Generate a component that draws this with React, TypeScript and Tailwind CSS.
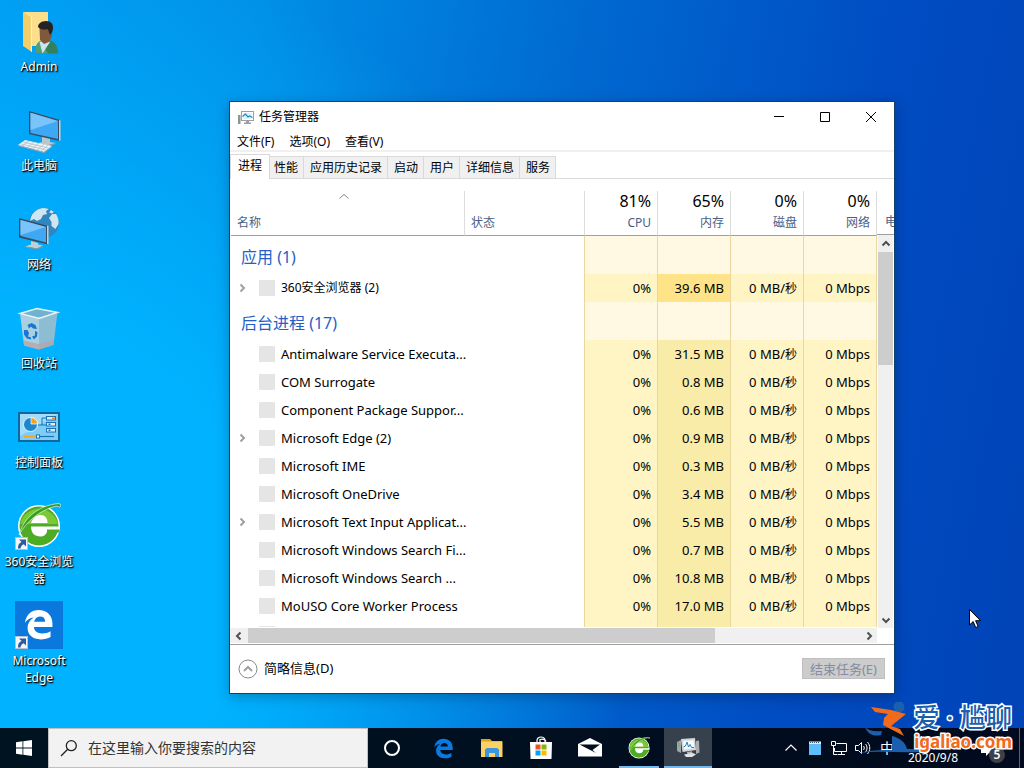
import React from "react";
import clsx from "clsx";

interface ProcessRow {
  name: string;
  memory: string;
  expandable?: boolean;
  small?: boolean;
}

const apps: ProcessRow[] = [
  { name: "360安全浏览器 (2)", memory: "39.6 MB", expandable: true, small: true },
];

const background: ProcessRow[] = [
  { name: "Antimalware Service Executa...", memory: "31.5 MB" },
  { name: "COM Surrogate", memory: "0.8 MB" },
  { name: "Component Package Suppor...", memory: "0.6 MB" },
  { name: "Microsoft Edge (2)", memory: "0.9 MB", expandable: true },
  { name: "Microsoft IME", memory: "0.3 MB" },
  { name: "Microsoft OneDrive", memory: "3.4 MB" },
  { name: "Microsoft Text Input Applicat...", memory: "5.5 MB", expandable: true },
  { name: "Microsoft Windows Search Fi...", memory: "0.7 MB" },
  { name: "Microsoft Windows Search ...", memory: "10.8 MB" },
  { name: "MoUSO Core Worker Process", memory: "17.0 MB" },
];

const tabs = ["进程", "性能", "应用历史记录", "启动", "用户", "详细信息", "服务"];

const usage = [
  { label: "CPU", value: "81%" },
  { label: "内存", value: "65%" },
  { label: "磁盘", value: "0%" },
  { label: "网络", value: "0%" },
];

const Shortcut = () => (
  <g>
    <rect x="0.500" y="35.500" width="12" height="12" fill="#f4f6f8" stroke="#b9c2cc" />
    <path d="M4 37.500h7v7l-2.300-2.300c-2 .8-3 2.300-3.200 4.300H3c0-3.500 1-5.200 3.600-6.400z" fill="#2d5c9e" />
  </g>
);

const AdminIcon = () => (
  <svg viewBox="0 0 48 48" className="size-12">
    <path d="M9 5h24v34H17z" fill="#fbdf8a" />
    <path d="M8 5l9 4v36L8 39z" fill="#f3cd68" />
    <path d="M8 5l9 4v36l-1.200-.8V9.800z" fill="#fdeeb4" />
    <path d="M20 46.500c0-8 3-13.500 11-13.500s12 5 12 13.500z" fill="#34805b" />
    <path d="M20 46.500c0-6 1.500-10.500 5-12.500l3 4 5 8.500z" fill="#4f9f78" />
    <path d="M24.500 35l3 11.500L35 35l-3-2z" fill="#cfe3ee" />
    <path d="M24.500 21h12l.5 8-3 6-5 2-4-4z" fill="#80593c" />
    <path d="M23 20c0-3 3-6 8-6 5 0 7.500 3 7 7.500-.3 3-1.200 4.500-3 6.500-1-2-1-4-2.500-6-3 1-6.500 1-9.500-2z" fill="#262224" />
  </svg>
);

const MonitorIcon = () => (
  <svg viewBox="0 0 48 48" className="size-12">
    <path d="M14 5l31 9v21l-31-7z" fill="#3a4a58" />
    <path d="M44 14l1.500.5v20L44 35z" fill="#c6d0d6" />
    <path d="M15.500 6.800L43 15v18l-27.500-6z" fill="#3fa8f5" />
    <path d="M15.500 6.800L43 15 15.500 24z" fill="#79c4fa" />
    <path d="M27 31l8 2v3l6 1-9 3-11-2 6-2z" fill="#b9c6cf" />
    <path d="M21 37l11 2.200L41 37v1l-9 3-11-2.800z" fill="#8696a2" />
    <path d="M10 34l27 6-8 6L3 39z" fill="#eef1f3" />
    <path d="M3 39l26 7 8-6v1l-8 6-26-7z" fill="#9aa6ae" />
    <path d="M8 36l25 6M6 38l25 6M14 35l-7 5M19 36l-7 6M24 37l-7 6M29 38l-7 6M33 39l-7 6" stroke="#b4bec5" strokeWidth=".8" />
  </svg>
);

const NetworkIcon = () => (
  <svg viewBox="0 0 48 48" className="size-12">
    <circle cx="29" cy="18" r="15" fill="#2f86c0" />
    <path d="M16 12c2-5 7-9 13-9l5 1-3 2 1 3-4 1-2 4-4 2-3-2-4 2zM34 13l3-4 4 0c2 3 3 6 2.500 10l-3 5-4-3v-4z" fill="#cfe6f1" />
    <path d="M36 5l3 2-2 1.500-3-1zM22 21l5 1 1 4-4 1z" fill="#cfe6f1" />
    <path d="M4 13l29 8v18.500L4 32.500z" fill="#3a4a58" />
    <path d="M32 20.500l1.500.5v18.500L32 39z" fill="#c6d0d6" />
    <path d="M5.500 15L31 22v15.500L5.500 31z" fill="#3fa8f5" />
    <path d="M5.500 15L31 22 5.500 30z" fill="#79c4fa" />
    <path d="M16 36l7 2v1.500l5 1-6 3-12-2 6-2z" fill="#c3ced6" />
    <path d="M10 41.200l12 2.300 6-3v1l-6 3-12-2.300z" fill="#8696a2" />
  </svg>
);

const RecycleIcon = () => (
  <svg viewBox="0 0 48 48" className="size-12">
    <path d="M5 9.500l17-5 20.500 4L24 14.500z" fill="#6fb3cf" stroke="#e6f3f8" strokeWidth="1.500" />
    <path d="M5 9.500l19 5v31L9 41.500z" fill="#a9cfe0" />
    <path d="M42.500 8.500L24 14.500v31l14.500-4.500z" fill="#8dbdd3" />
    <path d="M8.500 36.500L24 40l15.300-4.500-.8 5.500L24 45.500 9 41.500z" fill="#b8a4a6" opacity=".75" />
    <path d="M5 9.500l19 5 18.500-6" fill="none" stroke="#e6f3f8" strokeWidth="1.200" />
    <path d="M12.500 21l4-2 4 2 1.500 4-4-.5-2-2-2 2zM9 26h3.500l1.500 3-1 3.500 3 1v2l-4-1-3-4zM20 27l2.500 1-.5 4.500-3 3-2-3 3-1z" fill="#1877d0" />
  </svg>
);

const ControlPanelIcon = () => (
  <svg viewBox="0 0 48 48" className="size-12">
    <rect x="3" y="9" width="42" height="30" fill="#12679c" />
    <rect x="5" y="11" width="38" height="26" fill="#7fcdf5" />
    <path d="M5 11h38L5 33z" fill="#a3dbfa" />
    <circle cx="15.500" cy="21.500" r="7" fill="#1d86cd" stroke="#e5f4fc" strokeWidth="1" />
    <path d="M16 21V14.500a6.500 6.500 0 0 1 6.500 6.500z" fill="#f9a11b" stroke="#fff" strokeWidth=".7" />
    <path d="M23 22h4v-7h4M27 22h4" fill="none" stroke="#1b73b5" strokeWidth="1" />
    <g fill="#d8effb" stroke="#1b73b5" strokeWidth="1">
      <rect x="31.500" y="13.500" width="9" height="3.500" />
      <rect x="31.500" y="19.500" width="9" height="3.500" />
      <rect x="31.500" y="25.500" width="9" height="3.500" />
    </g>
    <path d="M37 15.300h3" stroke="#f47b20" strokeWidth="1.500" />
    <path d="M33.500 21.300h2M33.500 27.300h2" stroke="#1b73b5" strokeWidth="1.500" />
    <path d="M9 33.500h12" stroke="#f9a11b" strokeWidth="1.500" />
    <path d="M25 33.500h14" stroke="#1b73b5" strokeWidth="1.200" />
    <rect x="21.500" y="32" width="3" height="3" fill="#fff" stroke="#1b73b5" strokeWidth="1" />
  </svg>
);

const Browser360 = ({ shortcut, className }: { shortcut?: boolean; className: string }) => (
  <svg viewBox={shortcut ? "0 0 48 48" : "2 2 44 44"} className={className}>
    <circle cx="24" cy="24" r="21" fill="#fff" />
    <circle cx="24" cy="24" r="19.500" fill="#4dab24" />
    <path d="M5 22a19.500 19.500 0 0 1 38 0z" fill="#7cc936" />
    <path d="M16 21c2-5.500 5.500-8 9.500-8 4.500 0 7 3 7 8z" fill="#fff" />
    <path d="M45 24.500H16c0 6.500 3.500 10 9.500 10 3.500 0 5.500-2 6.500-4.500h12z" fill="#fff" />
    <path d="M32 27.500h12.700l-.8 3H32z" fill="#4dab24" />
    <path d="M4 33C8 17 23 3 44 1.500c2 0 2 3 .5 4C44 3.800 41 4 38 5 24 9 11 20 4 33z" fill="#35a01c" stroke="#fff" strokeWidth=".6" />
    {shortcut && <Shortcut />}
  </svg>
);

const edgePath =
  "M2 14.500C3.500 5.500 9 1 16.500 1 25 1 31 6.500 31 15.500V19H11.500c.2 4.500 4 6.800 8.500 6.800 3.500 0 6.500-1 9-2.400v6c-2.800 1.700-6.500 2.600-10.500 2.600C10 32 4.800 27 4.800 19.800c0-4.500 2.400-8.300 6.500-10.800C7 9.500 4.200 11.500 2 14.500zM11.700 13.500h11.600c0-3.800-2-5.700-5.500-5.700-3.200 0-5.400 2.200-6.100 5.700z";

const EdgeIcon = () => (
  <svg viewBox="0 0 48 48" className="size-12">
    <rect width="48" height="48" fill="#0a78dc" />
    <path transform="translate(8 8) scale(.95)" d={edgePath} fill="#fff" fillRule="evenodd" />
    <Shortcut />
  </svg>
);

const desktopItems = [
  { label: "Admin", icon: <AdminIcon /> },
  { label: "此电脑", icon: <MonitorIcon /> },
  { label: "网络", icon: <NetworkIcon /> },
  { label: "回收站", icon: <RecycleIcon /> },
  { label: "控制面板", icon: <ControlPanelIcon /> },
  { label: "360安全浏览器", icon: <Browser360 shortcut className="size-12" /> },
  { label: "Microsoft Edge", icon: <EdgeIcon /> },
];

const TitleIcon = () => (
  <svg viewBox="0 0 16 16" className="size-4">
    <path d="M0 6h2.500v9H0z" fill="#8d9398" />
    <path d="M.5 7.500h1.500" stroke="#5ac54a" strokeWidth="1.500" />
    <rect x="3.500" y="2.500" width="12" height="9" fill="#fff" stroke="#9aa0a5" />
    <rect x="5" y="4" width="9" height="6" fill="#dff1fa" />
    <path d="M4.500 7.500l3-2.500 2.500 3 1.500-1 3 1.500" fill="none" stroke="#2687ba" strokeWidth="1.200" />
    <path d="M8 12h3v1.500h2V15H6v-1.500h2z" fill="#9aa0a5" />
  </svg>
);

interface GlyphProps {
  d: string;
  className?: string;
}
const Glyph: React.FC<GlyphProps> = ({ d, className }) => (
  <svg viewBox="0 0 10 10" className={clsx("size-2.5", className)} fill="none" stroke="currentColor">
    <path d={d} />
  </svg>
);

const ProcessLine = ({ row, highlight }: { row?: ProcessRow; highlight?: boolean }) => (
  <tr className="h-7">
    <td className="p-0">
      <div className="flex items-center pl-1.5">
        <span className="flex w-[22px] shrink-0">
          {row?.expandable && (
            <button type="button" aria-label="展开">
              <Glyph d="M3.500 1.500L7 5 3.500 8.500" className="stroke-2 text-[#a0a0a0]" />
            </button>
          )}
        </span>
        <span className="size-4 shrink-0 bg-[#e5e5e5]" />
        <span className={clsx("pl-1.5 whitespace-nowrap", row?.small ? "text-xs" : "text-[13px]")}>
          {row?.name}
        </span>
      </div>
    </td>
    <td />
    <td className="border-l border-[#ead7a0] bg-[#fff4c4] p-0 pr-1.5 text-right">{row && "0%"}</td>
    <td
      className={clsx(
        "border-l border-[#ead7a0] p-0 pr-1.5 text-right",
        highlight ? "bg-[#ffe388]" : "bg-[#f9eba8]",
      )}
    >
      {row?.memory}
    </td>
    <td className="border-l border-[#ead7a0] bg-[#fff4c4] p-0 pr-1.5 text-right">
      {row && (
        <>
          0 MB/<span className="text-xs">秒</span>
        </>
      )}
    </td>
    <td className="border-x border-[#ead7a0] bg-[#fff4c4] p-0 pr-1.5 text-right">{row && "0 Mbps"}</td>
  </tr>
);

const GroupLine = ({ title }: { title: string }) => (
  <tr className="h-[38px]">
    <th colSpan={2} className="p-0 pt-1 pl-2.5 text-left text-base font-normal text-[#2560c8]">
      {title}
    </th>
    <td className="border-l border-[#ead7a0] bg-[#fff8e3]" />
    <td className="border-l border-[#ead7a0] bg-[#fff8e3]" />
    <td className="border-l border-[#ead7a0] bg-[#fff8e3]" />
    <td className="border-x border-[#ead7a0] bg-[#fff8e3]" />
  </tr>
);

const ProcessTable = () => (
  <div className="mt-3 flex min-h-0 flex-1">
    <div className="mb-px min-w-0 flex-1 overflow-hidden pl-px">
      <table className="w-full table-fixed border-separate border-spacing-0 text-[13px] leading-4">
        <colgroup>
          <col />
          <col className="w-[119px]" />
          <col className="w-[73px]" />
          <col className="w-[73px]" />
          <col className="w-[73px]" />
          <col className="w-[74px]" />
        </colgroup>
        <thead>
          <tr className="h-11 text-xs text-[#4a6084]">
            <th className="border-r border-b border-r-[#dcdcdc] border-b-[#a0a0a0] p-0 pl-1.5 text-left font-normal">
              <div className="flex h-[43px] flex-col justify-between pb-1">
                <Glyph d="M.5 6.500L5 2.500l4.500 4" className="ml-[102px] text-[#7a8797]" />
                名称
              </div>
            </th>
            <th className="border-b border-[#a0a0a0] p-0 pb-1 pl-1.5 text-left align-bottom font-normal">状态</th>
            {usage.map((item, i) => (
              <th
                key={item.label}
                className={clsx(
                  "border-b border-l border-b-[#a0a0a0] border-l-[#dcdcdc] p-0 pr-1.5 pb-1 text-right align-bottom font-normal",
                  i === usage.length - 1 && "border-r border-r-[#dcdcdc]",
                )}
              >
                <div className="pb-1 text-base leading-5 text-black">{item.value}</div>
                {item.label}
              </th>
            ))}
          </tr>
        </thead>
        <tbody>
          <GroupLine title="应用 (1)" />
          {apps.map((row) => (
            <ProcessLine key={row.name} row={row} highlight />
          ))}
          <GroupLine title="后台进程 (17)" />
          {background.map((row) => (
            <ProcessLine key={row.name} row={row} />
          ))}
          <ProcessLine />
        </tbody>
      </table>
    </div>
    <div className="flex w-[17px] flex-col">
      <div className="flex h-11 items-end overflow-hidden border-b border-[#a0a0a0] pb-1 pl-2 text-xs leading-4 text-[#4a6084]">
        <span className="shrink-0">电</span>
      </div>
      <div className="mx-px flex flex-1 flex-col items-center bg-[#f0f0f0] text-[#505050]">
        <button type="button" aria-label="向上滚动" className="flex h-[17px] items-center">
          <Glyph d="M1.500 6.500L5 3l3.500 3.500" className="stroke-2" />
        </button>
        <div className="h-[113px] w-full bg-[#cdcdcd]" />
        <button type="button" aria-label="向下滚动" className="mt-auto flex h-[17px] items-center">
          <Glyph d="M1.500 3.500L5 7l3.500-3.500" className="stroke-2" />
        </button>
      </div>
    </div>
  </div>
);

const TaskManager = () => (
  <section className="absolute top-[101px] left-[229px] flex h-[593px] w-[666px] flex-col border border-[#12406f] bg-white text-xs text-black shadow-[0_3px_12px_rgba(0,0,0,0.25)]">
    <header className="flex h-[30px] items-center pl-2">
      <TitleIcon />
      <h1 className="pl-[5px]">任务管理器</h1>
      <div className="ml-auto flex">
        <button type="button" aria-label="最小化" className="flex w-[46px] justify-center">
          <Glyph d="M0 4.500h10" />
        </button>
        <button type="button" aria-label="最大化" className="flex w-[46px] justify-center">
          <Glyph d="M.5.5h9v9h-9z" />
        </button>
        <button type="button" aria-label="关闭" className="flex w-[46px] justify-center">
          <Glyph d="M0 0l10 10M10 0L0 10" />
        </button>
      </div>
    </header>
    <nav className="flex h-5 items-end gap-[15px] border-b-2 border-[#f0f0f0] pl-[7px]">
      <button type="button">文件(F)</button>
      <button type="button">选项(O)</button>
      <button type="button">查看(V)</button>
    </nav>
    <div role="tablist" className="flex h-[27px] items-end border-b border-[#d9d9d9]">
      {tabs.map((tab, i) => (
        <button
          key={tab}
          type="button"
          role="tab"
          aria-selected={i === 0}
          className={clsx(
            i === 0
              ? "relative -mr-0.5 -mb-px h-[25px] border border-b-0 border-[#d9d9d9] bg-white px-[7px] pb-0.5"
              : "h-[22px] border-t border-r border-[#d9d9d9] bg-[#f0f0f0] pr-[5px] pl-1.5",
          )}
        >
          {tab}
        </button>
      ))}
    </div>
    <ProcessTable />
    <div className="mr-[17px] flex h-[15px] items-center bg-[#f0f0f0] text-[#505050]">
      <button type="button" aria-label="向左滚动" className="flex w-[18px] justify-center">
        <Glyph d="M6.500 1.500L3 5l3.500 3.500" className="stroke-2" />
      </button>
      <div className="h-full w-[467px] bg-[#cdcdcd]" />
      <button type="button" aria-label="向右滚动" className="ml-auto flex w-[17px] justify-center">
        <Glyph d="M3.500 1.500L7 5 3.500 8.500" className="stroke-2" />
      </button>
    </div>
    <footer className="mt-px flex h-[49px] items-center justify-between border-t border-[#a0a0a0] pr-[9px] pb-px pl-2 text-[13px]">
      <button type="button" className="flex items-center gap-1.5">
        <svg viewBox="0 0 20 20" className="size-5" fill="none" stroke="#8a8a8a">
          <circle cx="10" cy="10" r="9" />
          <path d="M6 12l4-4 4 4" stroke="#a0a0a0" strokeWidth="2" />
        </svg>
        简略信息(D)
      </button>
      <button type="button" disabled className="h-[21px] border border-[#bfbfbf] bg-[#cccccc] px-[7px] leading-4 text-[#838ba5]">
        结束任务(E)
      </button>
    </footer>
  </section>
);

const TaskbarTaskManager = () => (
  <svg viewBox="0 0 24 24" className="size-6">
    <path d="M1 6l4-2v13l-4-2z" fill="#9fa5aa" />
    <path d="M2 8l2-.5M2 10l2-.3" stroke="#5bbf4a" />
    <path d="M5 3l14-1 1 12-13.500 2z" fill="#d3d7d9" />
    <path d="M7 5l10.500-.7.700 8L8 13.500z" fill="#f7fbfd" />
    <path d="M7.500 11l2-1 1.500-4 1.500 5 1.500-2.500 1.500 3h2.500" fill="none" stroke="#2a85b8" />
    <path d="M20 5l3-.5.500 12-3.500 1.500z" fill="#a8aeb2" />
    <path d="M11 16l5-.7.500 3-5 .7z" fill="#b5babd" />
    <path d="M8 18.500l9-1.500 3 1.500-4 2.500h-6z" fill="#e0e3e5" />
  </svg>
);

const pinned = [
  {
    name: "Edge",
    icon: (
      <svg viewBox="1 0 31 33" className="size-[21px]">
        <path d={edgePath} fill="#0a7ae0" fillRule="evenodd" />
      </svg>
    ),
  },
  {
    name: "文件资源管理器",
    icon: (
      <svg viewBox="0 0 24 24" className="size-6">
        <path d="M1 3h9l2 2h10v3H1z" fill="#e0a21c" />
        <path d="M1 5.500h21.500V21H1z" fill="#fdd264" />
        <path d="M5 21v-7.500l2-1.500h10l2 1.500V21h-4v-4H9v4z" fill="#3b97dd" />
      </svg>
    ),
  },
  {
    name: "应用商店",
    icon: (
      <svg viewBox="0 0 24 24" className="size-6">
        <path d="M8 6V4.500a4 3.500 0 0 1 8 0V6M11 6V3.500a4 3 0 0 1 6 2" fill="none" stroke="#fff" strokeWidth="1.200" />
        <path d="M1 6h22l-.5 17H1.500z" fill="#fff" />
        <path d="M6.500 8.500h5v5h-5z" fill="#f25022" />
        <path d="M12.500 8.500h5v5h-5z" fill="#7fba00" />
        <path d="M6.500 14.500h5v5h-5z" fill="#00a4ef" />
        <path d="M12.500 14.500h5v5h-5z" fill="#ffb900" />
      </svg>
    ),
  },
  {
    name: "邮件",
    icon: (
      <svg viewBox="0 0 24 24" className="size-6">
        <path d="M0 8l12-6 12 6v12.500H0z" fill="#fff" />
        <path d="M1.500 8.500H22l-7.500 5.500 3.500 3z" fill="#010f1c" />
      </svg>
    ),
  },
  { name: "360安全浏览器", icon: <Browser360 className="size-[22px]" />, running: true },
  { name: "任务管理器", icon: <TaskbarTaskManager />, running: true, active: true },
];

const Taskbar = () => (
  <footer className="relative flex h-10 bg-linear-to-r from-[#001420] to-[#010a1e] text-white">
    <button type="button" aria-label="开始" className="flex w-12 items-center justify-center">
      <svg viewBox="0 0 16 16" className="size-4" fill="#fff">
        <path d="M0 2.200l6.500-.9v6.200H0zM7.300 1.200L16 0v7.500H7.300zM0 8.400h6.500v6.300L0 13.800zM7.300 8.400H16V16l-8.700-1.200z" />
      </svg>
    </button>
    <label className="flex w-80 items-center border border-[#c0c0c0] bg-[#f2f2f2] pl-[11px]">
      <svg viewBox="0 0 18 18" className="size-[18px]" fill="none" stroke="#222" strokeWidth="1.300">
        <circle cx="11.300" cy="6.700" r="5" />
        <path d="M7.700 10.300L1 17" />
      </svg>
      <input
        type="text"
        aria-label="搜索"
        placeholder="在这里输入你要搜索的内容"
        className="ml-2.5 min-w-0 flex-1 text-sm text-[#333] outline-none placeholder:text-[#333]"
      />
    </label>
    <button type="button" aria-label="Cortana" className="flex w-12 items-center justify-center">
      <span className="size-4 rounded-full border-2 border-white" />
    </button>
    <div className="ml-[3px] flex gap-px">
      {pinned.map((app) => (
        <button
          key={app.name}
          type="button"
          aria-label={app.name}
          className={clsx("flex w-12 flex-col items-center", app.active && "bg-[#37414d]")}
        >
          <span className="flex flex-1 items-center">{app.icon}</span>
          {app.running && <span className={clsx("-mt-0.5 h-0.5 bg-[#76b9ed]", app.active ? "w-full" : "w-10")} />}
        </button>
      ))}
    </div>
    <div className="ml-auto flex items-center">
      <div className="flex items-center gap-2">
        <svg viewBox="0 0 16 16" className="size-4" fill="none" stroke="#fff" strokeWidth="1.200">
          <path d="M2.500 10.500L8 5l5.500 5.500" />
        </svg>
        <svg viewBox="0 0 16 16" className="size-4">
          <path d="M2 2h12v13H2z" fill="#5ebcfb" />
          <path d="M2 1.500h12V4H2z" fill="#d9eefb" />
          <path d="M3 2.500h10" stroke="#456" strokeDasharray="1 1" />
        </svg>
        <svg viewBox="0 0 16 16" className="size-4" fill="none" stroke="#fff">
          <path d="M5.500 3.500h10v8H3.500V8M7 14.500h7M10.500 11.500v3M.5 1.500h4v4h-4zM2.500 5.500v9h4" />
        </svg>
        <svg viewBox="0 0 16 16" className="size-4" fill="none" stroke="#fff">
          <path d="M.5 5.500h3l3-3v11l-3-3h-3zM8.500 6c1 1.200 1 2.800 0 4M10.500 4c2 2.300 2 5.700 0 8M12.500 2c3 3.500 3 8.500 0 12" />
        </svg>
        <span className="w-4 text-center text-sm">中</span>
      </div>
      <time className="w-[74px] pt-0.5 pl-0.5 text-center text-xs leading-[17px]">
        10:21
        <br />
        2020/9/8
      </time>
      <button type="button" aria-label="通知" className="relative flex h-10 w-[50px] items-center pl-3">
        <svg viewBox="0 0 16 16" className="size-4" fill="#fff">
          <path d="M0 1h15v12H8l-3 3v-3H0z" />
        </svg>
        <span className="absolute top-[19px] left-5 flex size-4 items-center justify-center rounded-full bg-[#3d4147] text-xs font-semibold">
          5
        </span>
      </button>
      <span className="h-10 w-[5px] border-l border-[#5a6370]" />
    </div>
  </footer>
);

const Watermark = () => (
  <div className="pointer-events-none absolute right-3 bottom-3 flex items-end">
    <svg viewBox="0 0 74 54" className="-mr-5 h-[54px] w-[74px]">
      <path d="M0 51c12-3 22-3 33-3V34c8 2 13 6 15 13l26 .5c-8 2-16 3-26 2.800-16-.4-32-1.300-48 .7z" fill="#1c5fae" />
      <path d="M6 25c4 4 9 5 17 4l-1 4c-8 2-13-1-16-8z" fill="#1c5fae" />
      <circle cx="40" cy="5" r="5.500" fill="#1c5fae" />
      <path d="M12 5l20 3 15 4-15 12 9 3 4 7-21-11 1-7 4-4-13-2z" fill="#f26a1b" />
    </svg>
    <div className="relative flex flex-col items-end pb-0.5">
      <span className="text-[26px] leading-[26px] font-medium text-[#1c5fae] [-webkit-text-stroke:3px_white] [paint-order:stroke_fill]">
        爱 · 尴聊
      </span>
      <span className="text-[17px] leading-6 font-bold text-[#f26a1b] [-webkit-text-stroke:3px_white] [paint-order:stroke_fill]">
        igaliao.com
      </span>
    </div>
  </div>
);

export default function App() {
  return (
    <div className="relative flex min-h-screen flex-col overflow-hidden bg-[linear-gradient(100deg,#009cf2_0%,#0090e8_22%,#0068d0_52%,#004cc2_78%,#0043b6_100%)] font-['Noto_Sans','Noto_Sans_CJK_SC',sans-serif]">
      <div className="pointer-events-none absolute inset-0 bg-[radial-gradient(ellipse_640px_640px_at_0%_74%,#00b2ff_40%,transparent_100%)]" />
      <main className="relative flex-1">
        <ul className="flex w-[78px] flex-col">
          {desktopItems.map((item) => (
            <li key={item.label}>
              <button
                type="button"
                className="flex h-[99px] w-full flex-col items-center px-1 pt-[7px] text-xs leading-[17px] text-white text-shadow-[1px_1px_2px_#000,1px_1px_1px_#000]"
              >
                {item.icon}
                <span className="mt-[3px]">{item.label}</span>
              </button>
            </li>
          ))}
        </ul>
        <TaskManager />
        <svg viewBox="0 0 12 19" className="absolute top-[609px] left-[969px] h-[19px] w-3">
          <path d="M.5.500v15.500l3.700-3.500 2.500 6 2.500-1-2.600-5.800h5z" fill="#fff" stroke="#000" />
        </svg>
      </main>
      <Taskbar />
      <Watermark />
    </div>
  );
}
